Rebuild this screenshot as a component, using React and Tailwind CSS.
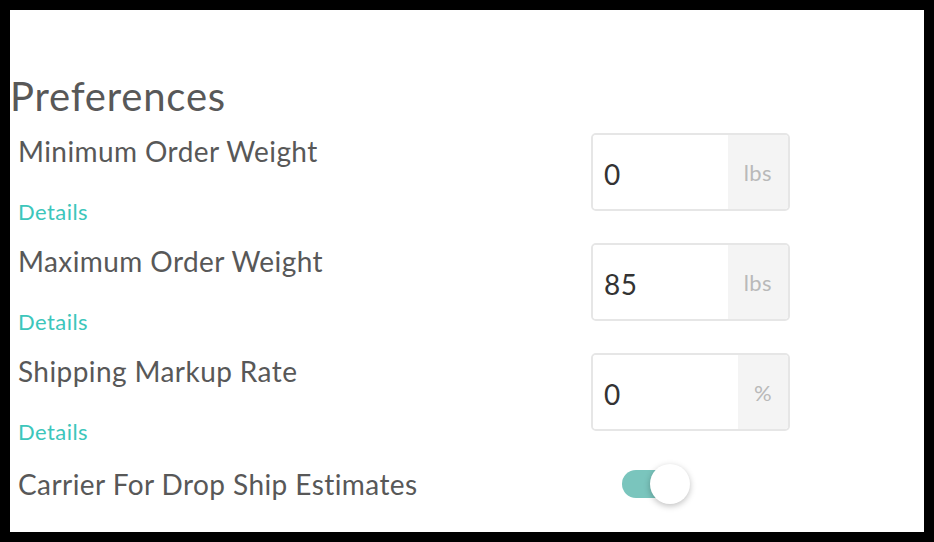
import { useState } from 'react'

const fields = [
  { label: 'Minimum Order Weight', value: '0', unit: 'lbs' },
  { label: 'Maximum Order Weight', value: '85', unit: 'lbs' },
  { label: 'Shipping Markup Rate', value: '0', unit: '%' },
]

const UnitInput = ({ value, unit }) => {
  const [val, setVal] = useState(value)
  return (
    <div className="flex h-[78px] w-[199px] overflow-hidden rounded-[5px] border-2 border-[#e6e6e6]">
      <input
        value={val}
        onChange={e => setVal(e.target.value)}
        className="min-w-0 flex-1 bg-white pl-[11px] pt-[4px] text-[28px] tracking-[0.02em] text-[#333] outline-none"
      />
      <span className="flex items-center bg-[#f4f4f4] px-4 text-[22px] tracking-[0.02em] text-[#b9b9b9]">{unit}</span>
    </div>
  )
}

export default function App() {
  const [on, setOn] = useState(true)

  return (
    <div className="h-[542px] w-[934px] bg-black p-[10px]" style={{ fontFamily: 'Lato, "Open Sans", sans-serif' }}>
      <div className="h-full w-full bg-white pt-[62px]">
        <h1 className="mb-[13px] text-[40px] leading-[48px] tracking-[0.02em] text-[#585858]">Preferences</h1>

        {fields.map(f => (
          <div key={f.label} className="flex h-[110px] items-start">
            <div className="flex w-[581px] flex-col pl-[8px] pt-[1px]">
              <span className="text-[28px] leading-[34px] tracking-[0.015em] text-[#585858]">{f.label}</span>
              <a href="#" className="mt-[31px] text-[22px] leading-[26px] tracking-[0.02em] text-[#3cc6bb]">Details</a>
            </div>
            <UnitInput value={f.value} unit={f.unit} />
          </div>
        ))}

        <div className="flex items-center pt-[1px]">
          <span className="w-[612px] pl-[8px] text-[28px] leading-[34px] tracking-[0.015em] text-[#585858]">Carrier For Drop Ship Estimates</span>
          <button onClick={() => setOn(!on)} className="relative h-[40px] w-[68px]">
            <span className="absolute left-0 top-[6px] h-[28px] w-[62px] rounded-full bg-[#7ac5bd]" />
            <span className="absolute left-[28px] top-0 h-[40px] w-[40px] rounded-full bg-white shadow-[0_2px_6px_rgba(0,0,0,0.25)]" />
          </button>
        </div>
      </div>
    </div>
  )
}
